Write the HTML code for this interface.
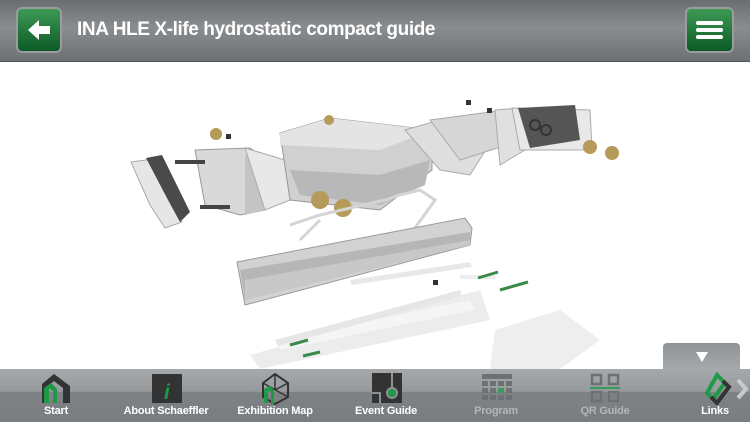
<!DOCTYPE html>
<html><head><style>
body{margin:0;width:750px;height:422px;overflow:hidden;background:#fff;font-family:"Liberation Sans",sans-serif;position:relative}
.top{position:absolute;left:0;top:0;width:750px;height:61px;background:linear-gradient(#6a6d70,#8a8d90 45%,#6e7174);border-bottom:1px solid #555}
.btn{position:absolute;top:7px;width:46px;height:46px;border-radius:6px;background:linear-gradient(#3d9a55,#0d5a26);border:2px solid #9a9c9e;box-sizing:border-box}
.title{position:absolute;left:77px;top:19px;color:#fff;font-weight:bold;font-size:19px;letter-spacing:-0.4px}
.bot{position:absolute;left:0;top:369px;width:750px;height:53px;background:linear-gradient(#a6a9ab,#979a9c 42%,#7f8285 44%,#7a7d80)}
.lab{position:absolute;top:405px;color:#fff;font-weight:bold;font-size:11px;transform:translateX(-50%);white-space:nowrap;letter-spacing:-0.2px}
.dim{color:#b3b5b7}
.tab{position:absolute;left:663px;top:343px;width:77px;height:27px;background:linear-gradient(#8f9294,#a7aaac);border-radius:4px 4px 0 0}
</style></head><body>
<div class="top">
<div class="btn" style="left:16px"><svg width="42" height="42" viewBox="0 0 42 42"><path d="M10 21 L21 11 L21 17 L32 17 L32 25 L21 25 L21 31 Z" fill="#fff"/></svg></div>
<div class="title">INA HLE X-life hydrostatic compact guide</div>
<div class="btn" style="left:685px;width:49px"><svg width="45" height="42" viewBox="0 0 45 42"><rect x="9" y="12" width="27" height="4" rx="2" fill="#fff"/><rect x="9" y="19" width="27" height="4" rx="2" fill="#fff"/><rect x="9" y="26" width="27" height="4" rx="2" fill="#fff"/></svg></div>
</div>
<svg style="position:absolute;left:0;top:0" width="750" height="369">
<!-- reflection -->
<polygon points="250,355 480,290 490,320 260,369" fill="#ececec"/>
<polygon points="275,340 470,300 475,310 280,350" fill="#f5f5f5"/>
<polygon points="495,330 560,310 600,340 560,369 490,369" fill="#eee"/>
<!-- left end -->
<polygon points="131,162 160,158 182,222 165,228 150,205" fill="#e6e6e6" stroke="#aaa"/>
<polygon points="146,158 162,155 190,212 180,222 168,200" fill="#4a4a4a"/>
<polygon points="195,150 250,148 267,160 265,210 240,215 205,205" fill="#d9d9d9" stroke="#999"/>
<polygon points="245,155 265,160 265,210 245,215" fill="#c4c4c4"/>
<rect x="175" y="160" width="30" height="4" fill="#444"/><rect x="200" y="205" width="30" height="4" fill="#444"/>
<polygon points="245,148 285,160 290,200 265,210" fill="#e8e8e8" stroke="#aaa"/>
<!-- main block -->
<polygon points="280,133 330,118 432,130 432,170 380,210 290,200" fill="#d0d0d0" stroke="#999"/>
<polygon points="280,133 330,118 432,130 380,150 280,145" fill="#e4e4e4"/>
<polygon points="290,170 380,175 430,160 425,185 380,205 300,195" fill="#b8b8b8"/>
<!-- right assembly -->
<polygon points="405,130 440,120 480,118 495,135 470,175 440,170" fill="#dedede" stroke="#aaa"/>
<polygon points="430,120 520,108 522,140 460,160" fill="#d6d6d6" stroke="#aaa"/>
<polygon points="495,110 520,108 525,150 500,165" fill="#e0e0e0" stroke="#aaa"/>
<polygon points="512,108 590,110 592,150 520,150" fill="#e8e8e8" stroke="#aaa"/>
<polygon points="518,108 575,105 580,140 530,148" fill="#555"/>
<circle cx="535" cy="125" r="5" fill="none" stroke="#333" stroke-width="2"/><circle cx="546" cy="130" r="5" fill="none" stroke="#333" stroke-width="2"/>
<rect x="466" y="100" width="5" height="5" fill="#333"/><rect x="487" y="108" width="5" height="5" fill="#333"/><rect x="226" y="134" width="5" height="5" fill="#333"/>
<!-- brass -->
<circle cx="216" cy="134" r="6" fill="#b59a5a"/><circle cx="329" cy="120" r="5" fill="#b59a5a"/>
<circle cx="320" cy="200" r="9" fill="#b59a5a"/><circle cx="343" cy="208" r="9" fill="#b59a5a"/>
<circle cx="590" cy="147" r="7" fill="#b59a5a"/><circle cx="612" cy="153" r="7" fill="#b59a5a"/>
<!-- wire -->
<path d="M290 225 L320 215 L385 200 L400 195 L420 190 L435 200 L410 235 M300 240 L320 220" fill="none" stroke="#d4d4d4" stroke-width="3"/>
<!-- rail -->
<polygon points="237,262 465,218 472,228 470,245 245,305" fill="#d2d2d2" stroke="#999"/>
<polygon points="240,270 470,232 470,245 245,300" fill="#b6b6b6"/>
<polygon points="245,280 470,240 470,245 245,300" fill="#c8c8c8"/>
<!-- strips -->
<polygon points="350,280 470,262 472,267 352,285" fill="#e8e8e8"/>
<polygon points="275,340 460,290 462,296 278,346" fill="#e6e6e6"/>
<rect x="460" y="275" width="35" height="4" fill="#eee"/>
<path d="M478 278 L498 272" stroke="#3a8a4a" stroke-width="3"/><path d="M500 290 L528 282" stroke="#3a8a4a" stroke-width="3"/>
<path d="M290 345 L308 340" stroke="#3a8a4a" stroke-width="3"/><path d="M303 356 L320 352" stroke="#3a8a4a" stroke-width="3"/>
<rect x="433" y="280" width="5" height="5" fill="#333"/>
</svg>
<div class="tab"><svg width="77" height="27"><path d="M33 9 L45 9 L39 19 Z" fill="#fff"/></svg></div>
<div class="bot"></div>
<svg style="position:absolute;left:0;top:369px" width="750" height="36">
<g transform="translate(42,5)"><path d="M0 29 V10 L12 0 L28 12 V29 H21 V14 L12 7 L7 11 V29Z" fill="#333"/><path d="M2 29 V14 L9 9 L15 15 V29 H11 V17 L7 14 V29Z" fill="#1d9a45"/></g>
<g transform="translate(152,5)"><rect width="30" height="29" fill="#333"/><text x="12" y="25" fill="#1d9a45" font-size="21" font-weight="bold" font-style="italic" font-family="Liberation Sans">i</text></g>
<g transform="translate(262,4)"><path d="M13 1 L26 10 L26 24 L13 31 L1 24 L1 10Z" fill="none" stroke="#333" stroke-width="2"/><path d="M1 10 L26 24 M26 10 L13 17 M13 1 L13 17" stroke="#333" stroke-width="1.5"/><path d="M2 30 V16 L8 13 L12 17 V31 H9 V19 L6 18 V30Z" fill="#1d9a45"/></g>
<g transform="translate(372,4)"><rect width="30" height="30" fill="#333"/><path d="M0 20 H8 V30 M20 0 V14" stroke="#8e9194" stroke-width="2" fill="none"/><circle cx="20" cy="20" r="5" fill="#1d9a45" stroke="#8e9194" stroke-width="2"/></g>
<g transform="translate(482,5)" fill="#6e7173"><rect width="30" height="5"/><rect y="7" width="6" height="5"/><rect x="8" y="7" width="6" height="5"/><rect x="16" y="7" width="6" height="5"/><rect x="24" y="7" width="6" height="5"/><rect y="14" width="6" height="5"/><rect x="8" y="14" width="6" height="5"/><rect x="16" y="14" width="6" height="5" fill="#3a9a5a"/><rect x="24" y="14" width="6" height="5"/><rect y="21" width="6" height="5"/><rect x="8" y="21" width="6" height="5"/><rect x="16" y="21" width="6" height="5"/><rect x="24" y="21" width="6" height="5"/></g>
<g transform="translate(590,4)" fill="none" stroke="#6e7173" stroke-width="2.5"><rect x="2" y="2" width="9" height="9"/><rect x="19" y="2" width="9" height="9"/><rect x="2" y="19" width="9" height="9"/><path d="M19 19h9v9h-9z" stroke-width="2"/><path d="M0 15 H30" stroke="#3a9a5a" stroke-width="2"/></g>
<g transform="translate(703,4)"><path d="M14 2 L22 10 L10 26 L4 20 Z" fill="none" stroke="#1d9a45" stroke-width="4"/><path d="M20 8 L26 14 L14 30 L8 24" fill="none" stroke="#333" stroke-width="4"/></g>
<path d="M738 11 L746 20 L738 29" stroke="#c8cacc" stroke-width="4" fill="none"/>
</svg>
<div class="lab" style="left:56px">Start</div>
<div class="lab" style="left:166px">About Schaeffler</div>
<div class="lab" style="left:275px">Exhibition Map</div>
<div class="lab" style="left:386px">Event Guide</div>
<div class="lab dim" style="left:496px">Program</div>
<div class="lab dim" style="left:605px">QR Guide</div>
<div class="lab" style="left:715px">Links</div>
</body></html>
